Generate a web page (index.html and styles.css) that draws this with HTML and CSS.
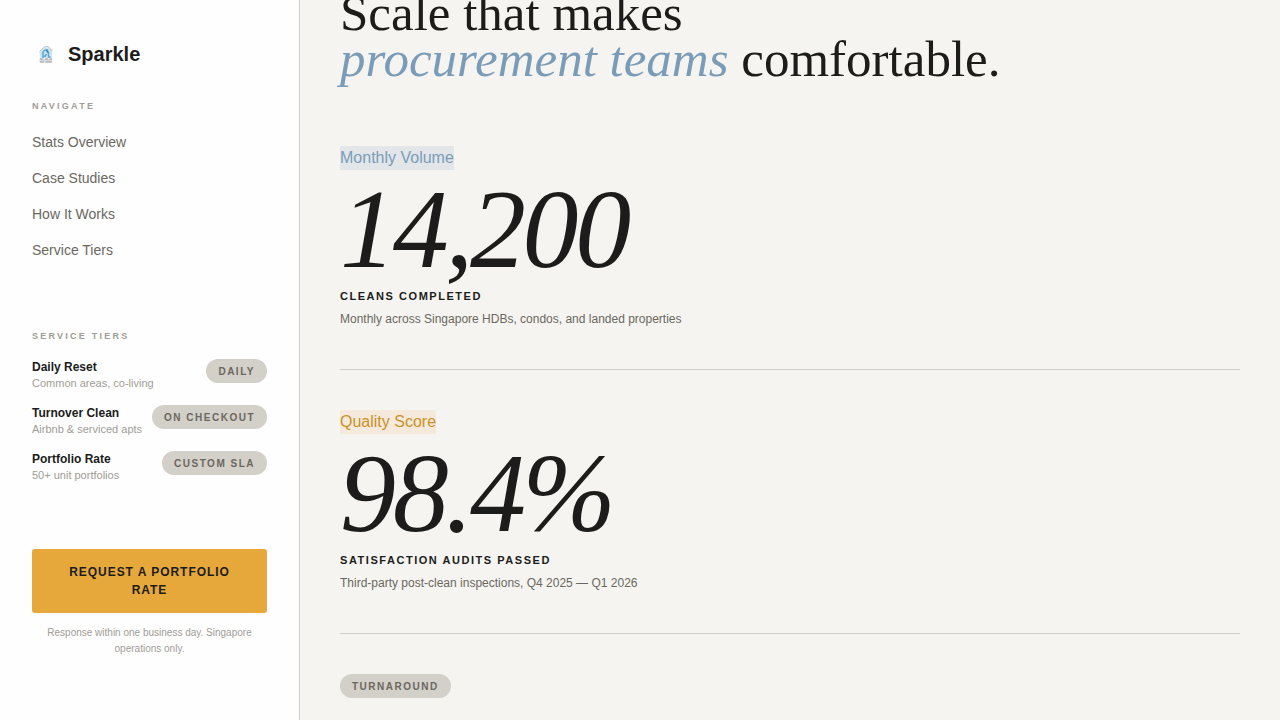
FILE: index.html
```html
<!DOCTYPE html>
<html lang="en">
<head>
<meta charset="utf-8">
<meta name="viewport" content="width=device-width, initial-scale=1">
<title>Sparkle</title>
<link rel="stylesheet" href="styles.css">
</head>
<body>
<div class="layout">
  <aside class="sidebar">
    <div class="brand">
      <svg class="brand-icon" viewBox="0 0 28 28" aria-hidden="true">
        <path d="M7.500 12 L13 6.500 L16 6.500 L20 10 L20 18 L8 18 Z" fill="#cfe5f1"/>
        <path d="M7.500 11.500 L12.500 6.500 H16 L20 10" fill="none" stroke="#c3ced3" stroke-width="1"/>
        <path d="M11 18 V12 L13 10 H15.500 V13 M16.500 12 V17 H18.500 M12.500 17 L14.500 14" fill="none" stroke="#5fa8d2" stroke-width="1.600"/>
        <path d="M14 10 L16.500 12.500" stroke="#3c84b2" stroke-width="1.200"/>
        <path d="M18.500 9 L20.500 11 M20.500 9 L18.500 11" stroke="#dcc596" stroke-width="0.800"/>
        <path d="M7.500 18.500 H20 V22.500 H7.500 Z" fill="#d8d9da"/>
        <path d="M8 19 H11 M13 19 H16 M17.500 19 H20 M8 22 H12 M13.500 22 H19.500" stroke="#97999b" stroke-width="0.900"/>
      </svg>
      <span class="brand-name">Sparkle</span>
    </div>
    <h2 class="side-title">Navigate</h2>
    <nav class="nav" aria-label="Main">
      <a href="#stats">Stats Overview</a>
      <a href="#cases">Case Studies</a>
      <a href="#how">How It Works</a>
      <a href="#tiers">Service Tiers</a>
    </nav>
    <section class="tiers" id="tiers">
      <h2 class="side-title">Service Tiers</h2>
      <ul class="tier-list">
        <li class="tier"><div><div class="tier-name">Daily Reset</div><div class="tier-note">Common areas, co-living</div></div><span class="pill">Daily</span></li>
        <li class="tier"><div><div class="tier-name">Turnover Clean</div><div class="tier-note">Airbnb &amp; serviced apts</div></div><span class="pill">On checkout</span></li>
        <li class="tier"><div><div class="tier-name">Portfolio Rate</div><div class="tier-note">50+ unit portfolios</div></div><span class="pill">Custom SLA</span></li>
      </ul>
    </section>
    <button class="cta" type="button">Request a Portfolio Rate</button>
    <p class="cta-note">Response within one business day. Singapore operations only.</p>
  </aside>
  <main class="main" id="stats">
    <h1 class="headline">Scale that makes<br><em>procurement teams</em> comfortable.</h1>
    <section class="stat">
      <span class="tag tag-blue">Monthly Volume</span>
      <div class="stat-value">14,200</div>
      <h3 class="stat-label">Cleans completed</h3>
      <p class="stat-note">Monthly across Singapore HDBs, condos, and landed properties</p>
    </section>
    <section class="stat">
      <span class="tag tag-amber">Quality Score</span>
      <div class="stat-value">98.4%</div>
      <h3 class="stat-label">Satisfaction audits passed</h3>
      <p class="stat-note">Third-party post-clean inspections, Q4 2025 — Q1 2026</p>
    </section>
    <section class="stat">
      <span class="pill">Turnaround</span>
    </section>
  </main>
</div>
</body>
</html>
```
FILE: styles.css
```css
* { box-sizing: border-box; }
body, h1, h2, h3, p, ul { margin: 0; padding: 0; }
body {
  background: #f5f4f0;
  color: #1c1c1a;
  font-family: "Liberation Sans", Arial, sans-serif;
}
.layout { display: flex; height: 100vh; overflow: hidden; }
.sidebar {
  flex: 0 0 300px;
  padding: 40px 32px;
  background: #fefefe;
  border-right: 1px solid #d0cdc6;
}
.brand { display: flex; align-items: center; gap: 8px; height: 28px; margin-bottom: 32px; }
.brand-icon { width: 28px; height: 28px; }
.brand-name { font-size: 20px; font-weight: 700; line-height: 28px; }
.side-title {
  color: #a09d96;
  font-size: 9px;
  font-weight: 700;
  letter-spacing: 0.25em;
  line-height: 12px;
  text-transform: uppercase;
}
.nav { display: flex; flex-direction: column; margin-top: 12px; }
.nav a { padding: 8px 0; color: #6b6860; font-size: 14px; line-height: 20px; text-decoration: none; }
.tiers { margin-top: 62px; }
.tier-list { display: flex; flex-direction: column; gap: 14px; margin-top: 17px; list-style: none; }
.tier { display: flex; align-items: flex-start; justify-content: space-between; white-space: nowrap; }
.tier-name { font-size: 12px; font-weight: 700; line-height: 16px; }
.tier-note { color: #a09d96; font-size: 11px; line-height: 16px; }
.pill {
  display: inline-block;
  padding: 5px 12px 4px;
  border-radius: 12px;
  background: #d3cfc9;
  color: #6b6860;
  font-size: 10px;
  font-weight: 700;
  letter-spacing: 0.15em;
  line-height: 15px;
  text-transform: uppercase;
}
.cta {
  display: block;
  width: 100%;
  margin-top: 66px;
  padding: 14px 24px;
  border: 0;
  border-radius: 3px;
  background: #e6a83a;
  color: #1c1c1a;
  font: 700 12px/18px "Liberation Sans", Arial, sans-serif;
  letter-spacing: 0.08em;
  text-transform: uppercase;
}
.cta-note { margin-top: 12px; color: #a09d96; font-size: 10px; line-height: 16px; text-align: center; }
.main { flex: 1; min-width: 0; padding: 0 40px; overflow: hidden; }
.headline {
  margin: -10px 0 24px;
  font: 400 51px/46px "Liberation Serif", "Times New Roman", serif;
}
.headline em { color: #7a9cb8; }
.stat { padding: 40px 0; border-bottom: 1px solid #d0cdc6; }
.tag { display: block; width: fit-content; font-size: 16px; line-height: 24px; }
.tag-blue { background: #e2e6e8; color: #7a9cb8; }
.tag-amber { background: #f4e9da; color: #c8922a; }
.stat-value {
  margin-top: 3px;
  font: italic 400 112px/112px "Liberation Serif", "Times New Roman", serif;
  letter-spacing: -0.03em;
}
.stat-label {
  margin-top: 3px;
  font-size: 11px;
  font-weight: 700;
  letter-spacing: 0.14em;
  line-height: 16px;
  text-transform: uppercase;
}
.stat-note { margin-top: 5px; color: #6b6860; font-size: 12px; line-height: 20px; }
```
